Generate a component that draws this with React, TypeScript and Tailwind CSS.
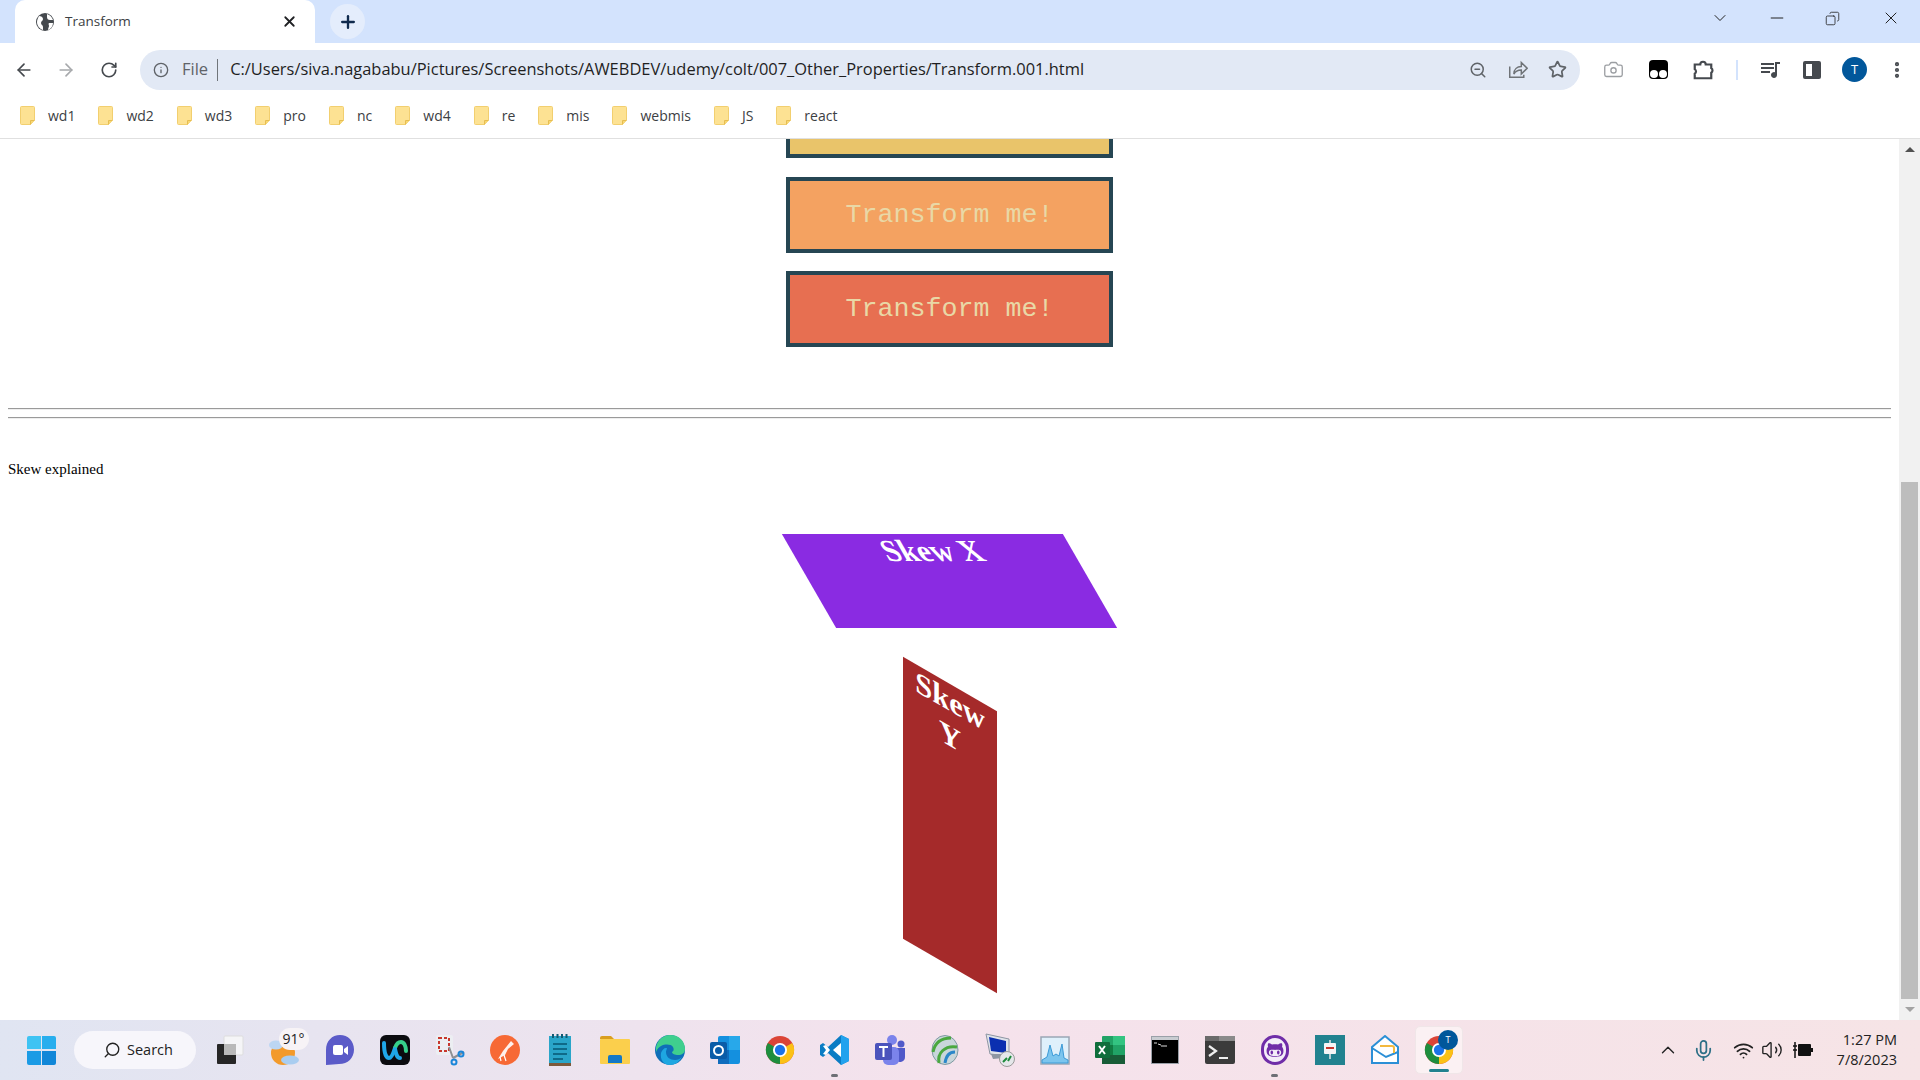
import React from 'react';
import { ArrowLeft, ArrowRight, ChevronDown, ChevronUp, Copy, Info, Mic, Minus, MoreVertical, Plus, RotateCw, Search, Star, Camera, Volume2, Wifi, X, ZoomOut } from 'lucide-react';
import { FaGithubAlt } from 'react-icons/fa';

const bookmarks = ['wd1', 'wd2', 'wd3', 'pro', 'nc', 'wd4', 're', 'mis', 'webmis', 'JS', 'react'];

const FolderIcon = () => (
    <svg width="15" height="19" viewBox="0 0 15 19">
        <path d="M1.5 0.5h12a1 1 0 0 1 1 1V14l-4 4.5h-9a1 1 0 0 1-1-1V1.500a1 1 0 0 1 1-1z" fill="#fde293" stroke="#f2cf6f" />
        <path d="M10.500 18.500V14.500h4" fill="#f7d774" stroke="#e6bd50" />
    </svg>
);

const ChromeLogo = () => (
    <svg width="30" height="30" viewBox="0 0 32 32">
        <circle cx="16" cy="16" r="15" fill="#db4437" />
        <path d="M16 16 L3 8.500 A15 15 0 0 0 16 31 Z" fill="#1e8e3e" />
        <path d="M16 16 L29 8.500 A15 15 0 0 1 16 31 Z" fill="#fbc116" />
        <circle cx="16" cy="16" r="7.500" fill="#fff" />
        <circle cx="16" cy="16" r="5.500" fill="#1a73e8" />
    </svg>
);

const TaskbarIcons: React.ReactNode[] = [
    // task view
    <svg key="tv" width="30" height="30" viewBox="0 0 30 30">
        <rect x="9" y="1" width="19" height="19" rx="1" fill="#f5f5f7" stroke="#ddd" />
        <rect x="2" y="9" width="19" height="20" rx="1" fill="#262626" />
        <rect x="9" y="9" width="12" height="11" fill="#b9b9b9" />
    </svg>,
    // weather
    <div key="we" className="relative w-[34px] h-[34px]">
        <svg width="34" height="34" viewBox="0 0 34 34">
            <circle cx="15" cy="20" r="12" fill="#f39a2b" />
            <ellipse cx="8" cy="12" rx="7" ry="4.500" fill="#bcd6f2" />
            <ellipse cx="22" cy="27" rx="9" ry="4.500" fill="#a9cdf0" />
        </svg>
        <span className="absolute top-[-5px] left-[11px] w-[30px] h-[22px] rounded-full bg-[#f7f3f6] text-[14px] leading-[22px] text-center text-[#222] font-['Open_Sans',sans-serif]">91°</span>
    </div>,
    // meet
    <svg key="me" width="30" height="32" viewBox="0 0 30 32">
        <path d="M15 1C7 1 1 7 1 16v15c5 0 9-1 13-1 9 0 15-6 15-14.500S23 1 15 1z" fill="#5b5bc8" />
        <rect x="8" y="11" width="10" height="10" rx="2" fill="#fff" />
        <path d="M19 15l4-3v9l-4-3z" fill="#fff" />
    </svg>,
    // webex
    <div key="wx" className="w-[30px] h-[30px] rounded-[6px] bg-[#0b0b0f] flex items-center justify-center">
        <svg width="26" height="20" viewBox="0 0 26 20" fill="none" strokeWidth="4" strokeLinecap="round">
            <path d="M2 3c0 10 2 15 5 15s5-7 6-10" stroke="#1fa7e8" />
            <path d="M13 8c1-3 3-6 6-6s5 4 5 9" stroke="#35d08a" />
            <path d="M13 9c1 5 2 9 5 9" stroke="#1fa7e8" />
        </svg>
    </div>,
    // snipping tool
    <svg key="sn" width="30" height="32" viewBox="0 0 30 32" fill="none">
        <rect x="1" y="1" width="17" height="20" rx="2" fill="#eceef2" />
        <rect x="4" y="4" width="10" height="13" stroke="#c8372d" strokeWidth="2" strokeDasharray="3 2" />
        <path d="M14 13l4 11M29 18l-11 6" stroke="#8d8f94" strokeWidth="2" />
        <circle cx="19" cy="28" r="2.500" stroke="#1a86d9" strokeWidth="2" />
        <circle cx="26" cy="20" r="2.500" stroke="#1a86d9" strokeWidth="2" />
    </svg>,
    // postman
    <svg key="po" width="30" height="30" viewBox="0 0 30 30">
        <circle cx="15" cy="15" r="15" fill="#f76935" />
        <path d="M21 6l3 3-6 5-3 6-7 4 5-8z" fill="#fff" opacity="0.9" />
        <path d="M10 22l1 4M14 20l2 6" stroke="#fff" strokeWidth="1.200" />
    </svg>,
    // notepad
    <svg key="no" width="24" height="32" viewBox="0 0 24 32">
        <rect x="1" y="2" width="22" height="28" fill="#2aa5c9" />
        <rect x="1" y="29" width="22" height="3" fill="#7d5a3c" />
        <path d="M5 0v4M9.500 0v4M14 0v4M18.500 0v4" stroke="#115a73" strokeWidth="2" />
        <path d="M5 10h14M5 15h14M5 20h14M5 25h10" stroke="#0f6a88" strokeWidth="2" />
    </svg>,
    // explorer
    <svg key="ex" width="30" height="28" viewBox="0 0 30 28">
        <path d="M0 2a2 2 0 0 1 2-2h9l3 3h-14z" fill="#d99e1f" />
        <rect x="0" y="3" width="30" height="25" rx="1" fill="#fbcf4c" />
        <path d="M8 27v-6a2 2 0 0 1 2-2h10a2 2 0 0 1 2 2v6z" fill="#1478c6" />
    </svg>,
    // edge
    <svg key="ed" width="30" height="30" viewBox="0 0 30 30">
        <circle cx="15" cy="15" r="15" fill="#0f6fb8" />
        <path d="M1 12C3 4 9 0 15 0c9 0 15 6 15 14 0 4-3 6-7 6-3 0-6-1-6-3 2-1 2-3 1-5-2-3-8-3-12-1-2 1-4 3-5 6z" fill="#3fcf8e" />
        <path d="M11 17c0 5 4 8 9 8 3 0 5-1 7-3-3 5-7 8-12 8C8 30 5 24 6 18c1-3 3-5 5-5 2 0 0 2 0 4z" fill="#1ea7e1" />
    </svg>,
    // outlook
    <svg key="ou" width="32" height="30" viewBox="0 0 32 30">
        <rect x="9" y="1" width="22" height="28" rx="2" fill="#1490df" />
        <rect x="20" y="1" width="11" height="14" fill="#28a8ea" />
        <rect x="9" y="15" width="11" height="14" fill="#0f6cbd" />
        <rect x="1" y="7" width="17" height="17" rx="2" fill="#0a5ca8" />
        <circle cx="9.500" cy="15.500" r="4.500" fill="none" stroke="#fff" strokeWidth="2" />
    </svg>,
    <ChromeLogo key="ch" />,
    // vscode
    <svg key="vs" width="30" height="30" viewBox="0 0 30 30">
        <path d="M21 0l8 4v22l-8 4-13-12-5 4-3-2v-10l3-2 5 4z" fill="#0a7cc4" />
        <path d="M21 0l8 4v22l-8 4z" fill="#22a2ee" />
        <path d="M21 8l-8 7 8 7z" fill="#fff" />
        <path d="M3 11l3-1 4 5-4 5-3-1 3-4z" fill="#fff" />
    </svg>,
    // teams
    <svg key="te" width="30" height="30" viewBox="0 0 30 30">
        <circle cx="17" cy="5" r="5" fill="#7b83eb" />
        <circle cx="26" cy="9" r="3.500" fill="#5059c9" />
        <path d="M21 13h9v9a5 5 0 0 1-9 3z" fill="#5059c9" />
        <rect x="8" y="12" width="16" height="18" rx="5" fill="#7b83eb" />
        <rect x="0" y="8" width="17" height="17" rx="2" fill="#4b53bc" />
        <path d="M4 12h9M8.500 12v10" stroke="#fff" strokeWidth="2" />
    </svg>,
    // globe
    <svg key="gl" width="28" height="30" viewBox="0 0 28 30" fill="none">
        <ellipse cx="14" cy="15" rx="13" ry="14.500" fill="#c9d6da" stroke="#7f9aa2" />
        <path d="M2 17C4 7 10 3 20 3M8 28C6 18 14 10 26 12" stroke="#4aa83f" strokeWidth="3" />
        <path d="M14 28c1-7 4-11 10-11" stroke="#2b87c9" strokeWidth="3" />
    </svg>,
    // remote desktop
    <svg key="rd" width="30" height="34" viewBox="0 0 30 34">
        <path d="M1 1l23 5v17l-19-2z" fill="#dfe3ea" stroke="#8e96a3" />
        <path d="M4 4l17 4v12L6 18z" fill="#0b2fb0" />
        <path d="M6 21h12v4l-10 1z" fill="#8e96a3" />
        <ellipse cx="22" cy="26" rx="7.500" ry="7.500" fill="#e5e7ea" stroke="#999" />
        <path d="M18 29l4-4M23 28l3-5" stroke="#1d8a3b" strokeWidth="2" />
    </svg>,
    // perfmon
    <svg key="pm" width="30" height="30" viewBox="0 0 30 30">
        <rect x="1" y="2" width="28" height="27" fill="#dff0fb" stroke="#9aa7b5" strokeWidth="1.500" />
        <path d="M2 25l5-3 3-12 3 11 3-2 3 2 3-12 2 14 4 2v3H2z" fill="#7cc5ee" stroke="#3c9ad6" />
    </svg>,
    // excel
    <svg key="xl" width="30" height="30" viewBox="0 0 30 30">
        <rect x="7" y="1" width="23" height="28" rx="1" fill="#21a366" />
        <rect x="18" y="1" width="12" height="9" fill="#33c481" />
        <rect x="7" y="10" width="11" height="10" fill="#107c41" />
        <rect x="18" y="20" width="12" height="9" fill="#185c37" />
        <rect x="7" y="20" width="11" height="9" fill="#185c37" />
        <rect x="0" y="7" width="15" height="16" rx="1" fill="#0f6e3b" />
        <path d="M4 11l6 8M10 11l-6 8" stroke="#fff" strokeWidth="2" />
    </svg>,
    // cmd
    <svg key="cm" width="28" height="28" viewBox="0 0 28 28">
        <rect x="0.500" y="0.500" width="27" height="27" fill="#000" stroke="#9aa0a8" />
        <rect x="1" y="1" width="26" height="3" fill="#c9ccd1" />
        <path d="M3 7h3M7 8l3 1M10 10h6" stroke="#ddd" strokeWidth="1" fill="none" />
    </svg>,
    // terminal
    <svg key="tm" width="30" height="28" viewBox="0 0 30 28">
        <rect x="0" y="0" width="30" height="28" rx="2" fill="#3b3b3b" />
        <rect x="0" y="0" width="14" height="5" fill="#6a6a6a" />
        <rect x="14" y="0" width="16" height="5" fill="#8a8a8a" />
        <path d="M4 10l7 5-7 5" stroke="#eee" strokeWidth="2.200" fill="none" />
        <path d="M14 22h9" stroke="#eee" strokeWidth="2" />
    </svg>,
    // github desktop
    <div key="gh" className="w-[28px] h-[30px] rounded-full bg-[#f3eef8] border-[3px] border-[#6f2da8] flex items-center justify-center text-[#6f2da8]">
        <FaGithubAlt size={18} />
    </div>,
    // teal app
    <div key="ta" className="w-[30px] h-[30px] bg-[#21828f] flex items-center justify-center">
        <svg width="14" height="20" viewBox="0 0 14 20">
            <rect x="1" y="3" width="12" height="11" rx="1" fill="#f5f5f5" />
            <rect x="3" y="7" width="8" height="2" fill="#c8372d" />
            <path d="M7 0v3M7 14v5" stroke="#e8e8e8" strokeWidth="1.500" />
        </svg>
    </div>,
    // mail
    <svg key="ma" width="30" height="30" viewBox="0 0 30 30" fill="none">
        <path d="M2 12L15 1l13 11v16H2z" fill="#fff" stroke="#2b8fd6" strokeWidth="2" />
        <path d="M2 13l14 9 12-5" stroke="#2b8fd6" strokeWidth="2" />
        <path d="M10 11h12a2 2 0 0 1 2 2v5" stroke="#f3b93f" strokeWidth="2" />
    </svg>,
];

const TransformBox = ({ color, text = true, className = '' }: { color: string; text?: boolean; className?: string }) => (
    <div className={`${color} ${className} w-[327px] h-[76px] mx-auto border-4 border-[#264653] flex items-center justify-center text-[#e9d8a6] text-[26.670px] font-['Liberation_Mono',monospace]`}>
        {text && 'Transform me!'}
    </div>
);

export default function App() {
    return (
        <div className="w-[1920px] h-[1080px] flex flex-col overflow-hidden bg-white font-['Open_Sans',sans-serif]">
            {/* Tab strip */}
            <div className="h-[43px] shrink-0 bg-[#d3e3fd] flex items-start">
                <div className="ml-[15px] w-[300px] h-[43px] bg-white rounded-t-[10px] flex items-center pl-[21px] pr-[17px]">
                    <svg width="18" height="18" viewBox="0 0 18 18" className="mr-[11px]">
                        <circle cx="9" cy="9" r="9" fill="#45494e" />
                        <path d="M3 3c2 0 4 1 4 3s-2 2-2 4 2 2 2 4v3C4 16 1 13 1 9c0-2 1-4 2-6zM11 1c3 1 5 3 6 6h-3c-2 0-3-1-3-3zM13 10h4c0 3-2 6-5 7 0-2 1-3 1-4s-1-2 0-3z" fill="#fff" />
                    </svg>
                    <span className="flex-1 text-[13.500px] text-[#3c4043]">Transform</span>
                    <X size={17} strokeWidth={2.500} className="text-[#202124]" />
                </div>
                <div className="ml-[15px] mt-[4px] w-[35px] h-[35px] rounded-full bg-[#e4edfc] flex items-center justify-center">
                    <Plus size={20} strokeWidth={2.800} className="text-[#0f2a4d]" />
                </div>
                <div className="flex-1" />
                <div className="flex items-center h-[36px] text-[#222]">
                    <ChevronDown size={20} strokeWidth={1.200} className="mr-[37px]" />
                    <Minus size={20} strokeWidth={1.200} className="mr-[38px]" />
                    <Copy size={15} strokeWidth={1.300} className="mr-[41px] -scale-x-100" />
                    <X size={20} strokeWidth={1.200} className="mr-[19px]" />
                </div>
            </div>

            {/* Toolbar */}
            <div className="h-[53px] shrink-0 bg-white flex items-center text-[#45494e]">
                <ArrowLeft size={20} strokeWidth={2} className="ml-[14px]" />
                <ArrowRight size={20} strokeWidth={2} className="ml-[22px] text-[#a7a9ac]" />
                <RotateCw size={18} strokeWidth={2.200} className="ml-[24px]" />
                <div className="ml-[22px] w-[1440px] h-[40px] rounded-full bg-[#e2e9f5] flex items-center pl-[13px] pr-[13px]">
                    <Info size={16} strokeWidth={2} className="text-[#5f6368]" />
                    <span className="ml-[13px] text-[16.500px] text-[#5f6368]">File</span>
                    <span className="ml-[9px] w-[1px] h-[22px] bg-[#70757a]" />
                    <span className="ml-[12px] flex-1 text-[16.450px] text-[#1f1f1f] whitespace-nowrap">C:/Users/siva.nagababu/Pictures/Screenshots/AWEBDEV/udemy/colt/007_Other_Properties/Transform.001.html</span>
                    <ZoomOut size={18} strokeWidth={2} className="text-[#5f6368]" />
                    <svg width="20" height="19" viewBox="0 0 24 23" fill="none" stroke="#6f7377" strokeWidth="1.800" className="ml-[21px]">
                        <path d="M2 8v13h17v-3" />
                        <path d="M7 17c0-6 4-9 9-9V3l7 7-7 7v-5c-4 0-7 1-9 5z" />
                    </svg>
                    <Star size={19} strokeWidth={2.200} className="ml-[20px] text-[#5f6368]" />
                </div>
                <Camera size={21} strokeWidth={1.500} className="ml-[23px] text-[#9b9ea2]" />
                <div className="ml-[25px] w-[19px] h-[19px] rounded-[4px] bg-black relative">
                    <span className="absolute left-[1px] bottom-[1px] w-[8px] h-[8px] rounded-full bg-white" />
                    <span className="absolute right-[1px] bottom-[1px] w-[8px] h-[8px] rounded-full bg-white" />
                </div>
                <svg width="22" height="22" viewBox="0 0 24 24" fill="none" stroke="#45494e" strokeWidth="2.400" className="ml-[24px]">
                    <path d="M3 6h6a3 3 0 0 1 6 0h6v4a3 3 0 0 1 0 5v6H3v-5a3 3 0 0 0 0-5z" />
                </svg>
                <span className="ml-[22px] w-[2px] h-[20px] bg-[#d3e3fd]" />
                <svg width="20" height="18" viewBox="0 0 20 18" className="ml-[23px]" fill="#45494e">
                    <path d="M0 2h13v2H0zM0 6h13v2H0zM0 10h9v2H0z" />
                    <path d="M14 1h5v2h-3v11a3 3 0 1 1-2-2.800z" />
                </svg>
                <div className="ml-[22px] w-[18px] h-[18px] rounded-[2px] bg-[#45494e] p-[3px] pr-[9px]">
                    <div className="w-full h-full bg-white" />
                </div>
                <div className="ml-[21px] w-[25px] h-[25px] rounded-full bg-[#01579b] text-white text-[13px] flex items-center justify-center">T</div>
                <MoreVertical size={20} strokeWidth={3} className="ml-[20px]" />
            </div>

            {/* Bookmarks */}
            <div className="h-[43px] shrink-0 bg-white border-b border-[#e0e0e0] flex items-center pl-[20px] pb-[4px] gap-[23px] text-[14px] text-[#3c4043]">
                {bookmarks.map((b) => (
                    <div key={b} className="flex items-center gap-[13px]">
                        <FolderIcon />
                        <span>{b}</span>
                    </div>
                ))}
            </div>

            {/* Page */}
            <div className="flex-1 min-h-0 flex overflow-hidden">
                <div className="flex-1 min-w-0 px-[8px] font-['Liberation_Serif',serif] text-black">
                    <TransformBox color="bg-[#e9c46a]" text={false} className="-mt-[57px]" />
                    <TransformBox color="bg-[#f4a261]" className="mt-[19px]" />
                    <TransformBox color="bg-[#e76f51]" className="mt-[18px]" />
                    <hr className="mt-[61px] h-[2px] border-t border-b-0 border-[#9a9a9a] bg-[#eeeeee]" />
                    <hr className="mt-[7px] h-[2px] border-t border-b-0 border-[#9a9a9a] bg-[#eeeeee]" />
                    <p className="mt-[42px] text-[15px] leading-[17px]">Skew explained</p>
                    <div className="mt-[56px] w-[281px] h-[94px] mx-auto bg-[#8a2be2] skew-x-[30deg] text-white font-bold text-[30.500px] leading-[35px] text-center">Skew X</div>
                    <div className="mt-[56px] w-[94px] h-[282px] mx-auto bg-[#a52a2a] skew-y-[30deg] text-white font-bold text-[30.500px] leading-[35px] text-center">Skew Y</div>
                </div>
                {/* Scrollbar */}
                <div className="w-[21px] shrink-0 bg-[#f1f1f1] flex flex-col items-center">
                    <div className="h-[21px] flex items-center justify-center">
                        <div className="w-0 h-0 border-x-[5px] border-x-transparent border-b-[5px] border-b-[#505050]" />
                    </div>
                    <div className="w-[17px] mt-[322px] flex-1 bg-[#bdbdbd]" />
                    <div className="h-[21px] flex items-center justify-center">
                        <div className="w-0 h-0 border-x-[5px] border-x-transparent border-t-[5px] border-t-[#a3a3a3]" />
                    </div>
                </div>
            </div>

            {/* Taskbar */}
            <div className="h-[60px] shrink-0 bg-linear-to-r from-[#e0e5f2] via-[#f5e2ec] to-[#f6e4e6] flex items-center pl-[14px] pr-[23px]">
                <div className="w-[55px] flex justify-center">
                    <div className="grid grid-cols-2 gap-[1.500px] w-[29px] h-[29px]">
                        <span className="bg-[#3ec3f3] rounded-tl-[2px]" />
                        <span className="bg-[#27aeee] rounded-tr-[2px]" />
                        <span className="bg-[#1b9be5] rounded-bl-[2px]" />
                        <span className="bg-[#1187d8] rounded-br-[2px]" />
                    </div>
                </div>
                <div className="ml-[5px] w-[122px] h-[38px] rounded-full bg-[#f7f6fb] flex items-center pl-[29px] text-[14.500px] text-[#222]">
                    <Search size={18} strokeWidth={1.800} className="-scale-x-100 mr-[6px]" />
                    Search
                </div>
                <div className="ml-[6px] flex items-center">
                    {TaskbarIcons.map((icon, i) => (
                        <div key={i} className="relative w-[55px] h-[60px] flex items-center justify-center">
                            {icon}
                            {(i === 11 || i === 19) && <span className="absolute bottom-[3px] w-[7px] h-[3px] rounded-full bg-[#6d6f75]" />}
                        </div>
                    ))}
                    {/* active chrome */}
                    <div className="relative w-[48px] h-[48px] ml-[3px] rounded-[5px] bg-[#fbf1f3] border border-[#f0e6e8] flex items-center justify-center">
                        <ChromeLogo />
                        <span className="absolute top-[3px] right-[4px] w-[20px] h-[20px] rounded-full bg-[#01579b] text-white text-[9px] flex items-center justify-center">T</span>
                        <span className="absolute bottom-[1px] left-[13px] w-[20px] h-[3px] rounded-full bg-[#21828f]" />
                    </div>
                </div>
                <div className="flex-1" />
                <ChevronUp size={22} strokeWidth={1.500} className="text-[#222]" />
                <Mic size={23} strokeWidth={1.800} className="ml-[13px] text-[#2d6f86]" />
                <Wifi size={21} strokeWidth={2} className="ml-[18px] text-[#222]" />
                <Volume2 size={22} strokeWidth={1.500} className="ml-[7px] text-[#222]" />
                <svg width="20" height="16" viewBox="0 0 20 16" className="ml-[10px]">
                    <path d="M0 4h4M0 8h4M2 0v16" stroke="#111" strokeWidth="1.500" />
                    <rect x="5" y="2" width="13" height="12" rx="1" fill="#111" />
                    <rect x="18" y="6" width="2" height="4" fill="#111" />
                </svg>
                <div className="ml-[24px] text-right text-[14.500px] leading-[20px] text-[#222]">
                    <div>1:27 PM</div>
                    <div>7/8/2023</div>
                </div>
            </div>
        </div>
    );
}
